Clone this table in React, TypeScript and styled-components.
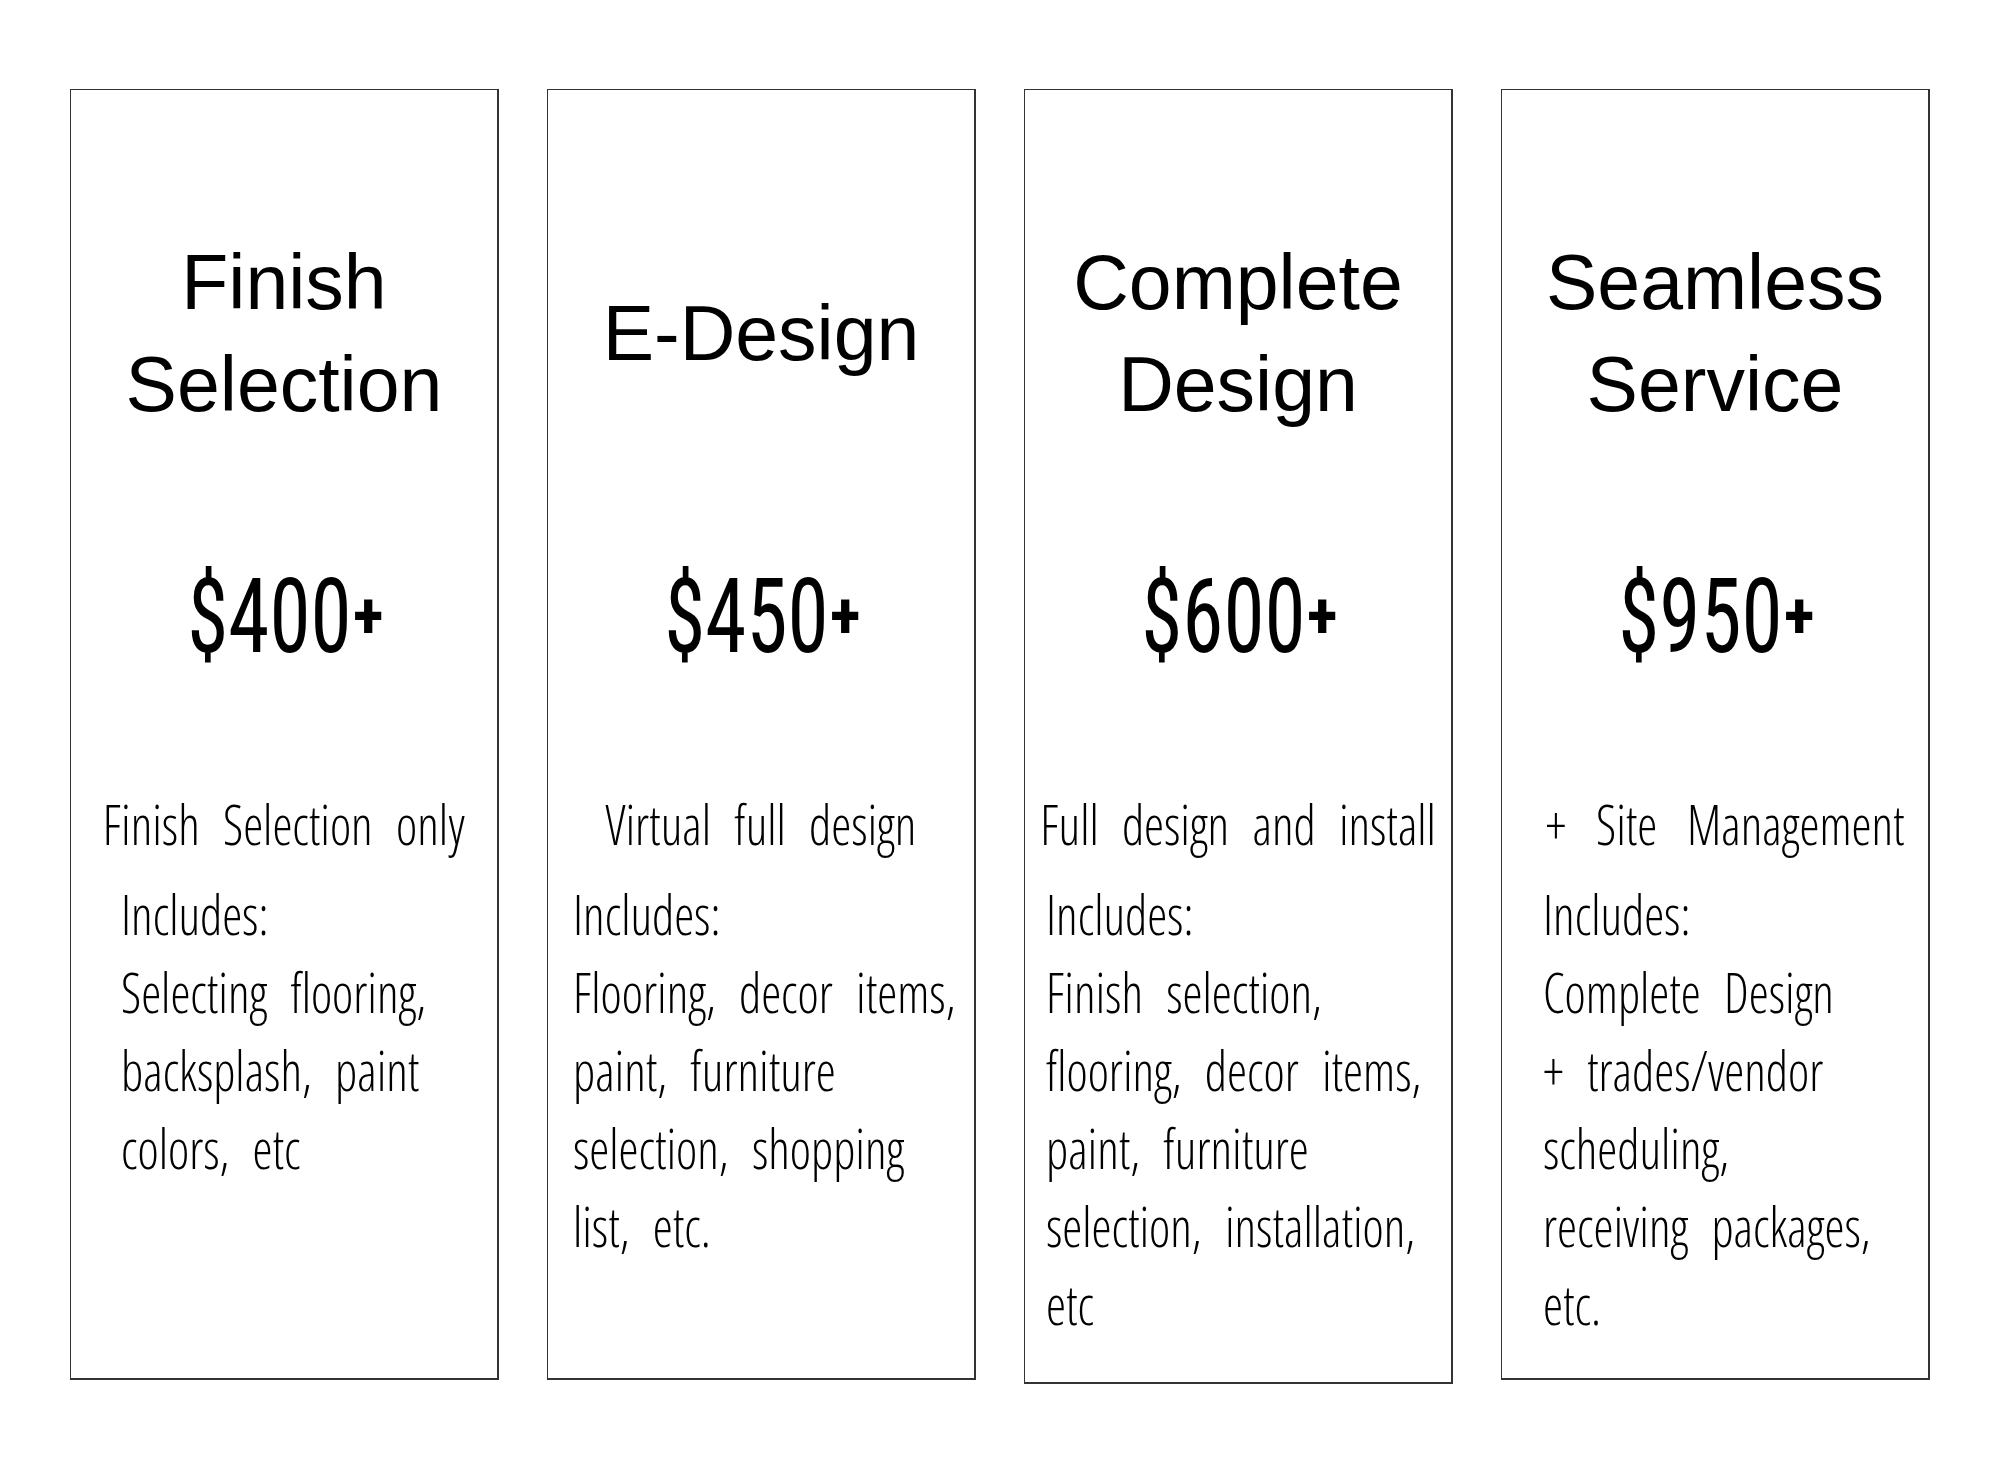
import React from 'react';
import styled, { createGlobalStyle } from 'styled-components';

const Global = createGlobalStyle`
  body {
    margin: 0;
    background: #ffffff;
    color: #000000;
  }
`;

type Plan = {
  title: string;
  price: string;
  lead: string;
  lines: string[];
  indent: number;
  shift: number;
  height: number;
};

const plans: Plan[] = [
  {
    title: 'Finish Selection',
    price: '$400',
    lead: 'Finish Selection only',
    lines: ['Includes:', 'Selecting flooring,', 'backsplash, paint', 'colors, etc'],
    indent: 50,
    shift: 0,
    height: 1291,
  },
  {
    title: 'E-Design',
    price: '$450',
    lead: 'Virtual full design',
    lines: ['Includes:', 'Flooring, decor items,', 'paint, furniture', 'selection, shopping', 'list, etc.'],
    indent: 25,
    shift: 0,
    height: 1291,
  },
  {
    title: 'Complete Design',
    price: '$600',
    lead: 'Full design and install',
    lines: [
      'Includes:',
      'Finish selection,',
      'flooring, decor items,',
      'paint, furniture',
      'selection, installation,',
      'etc',
    ],
    indent: 21,
    shift: 0,
    height: 1295,
  },
  {
    title: 'Seamless Service',
    price: '$950',
    lead: '+ Site Management',
    lines: ['Includes:', 'Complete Design', '+ trades/vendor', 'scheduling,', 'receiving packages,', 'etc.'],
    indent: 41,
    shift: 20,
    height: 1291,
  },
];

const Page = styled.main`
  display: flex;
  align-items: flex-start;
  gap: 48px;
  padding: 89px 0 0 70px;
`;

const Card = styled.section<{ $height: number }>`
  box-sizing: border-box;
  width: 429px;
  height: ${(p) => p.$height}px;
  display: flex;
  flex-direction: column;
  padding-top: 141px;
  border: 1px solid #333;
  border-right-width: 2px;
  border-bottom-width: 2px;
`;

const Title = styled.h2`
  margin: 0;
  height: 204px;
  display: flex;
  align-items: center;
  justify-content: center;
  padding: 0 12px;
  text-align: center;
  font-family: 'Liberation Sans', Arial, sans-serif;
  font-weight: 400;
  font-size: 77px;
  line-height: 102px;
`;

const Price = styled.div`
  margin-top: 122px;
  height: 120px;
  display: flex;
  align-items: center;
  justify-content: center;
  font-family: 'Roboto Condensed', sans-serif;
  font-weight: 400;
  font-size: 104px;
  line-height: 120px;
  transform: scaleX(0.8);
`;

const Plus = styled.span`
  display: inline-block;
  margin-left: 6px;
  font-size: 64px;
  font-weight: 700;
  line-height: 64px;
  transform: scaleX(1.25);
`;

const Line = styled.div`
  white-space: nowrap;
  font-family: 'Open Sans', sans-serif;
  font-weight: 300;
  font-stretch: 75%;
  font-size: 55px;
  line-height: 78px;
  word-spacing: 15px;
  transform: scaleX(0.92);
  transform-origin: left center;
`;

const Lead = styled(Line)<{ $shift: number }>`
  align-self: center;
  margin-top: 108px;
  margin-bottom: 12px;
  margin-left: ${(p) => p.$shift}px;
  word-spacing: ${(p) => (p.$shift ? 22 : 15)}px;
  transform-origin: center center;
`;

const Details = styled.div<{ $indent: number }>`
  display: flex;
  flex-direction: column;
  padding-left: ${(p) => p.$indent}px;
`;

function PlanCard({ plan }: { plan: Plan }) {
  return (
    <Card $height={plan.height}>
      <Title>{plan.title}</Title>
      <Price>
        {plan.price}
        <Plus>+</Plus>
      </Price>
      <Lead $shift={plan.shift}>{plan.lead}</Lead>
      <Details $indent={plan.indent}>
        {plan.lines.map((l) => (
          <Line key={l}>{l}</Line>
        ))}
      </Details>
    </Card>
  );
}

export default function App() {
  return (
    <>
      <Global />
      <Page>
        {plans.map((p) => (
          <PlanCard key={p.title} plan={p} />
        ))}
      </Page>
    </>
  );
}
